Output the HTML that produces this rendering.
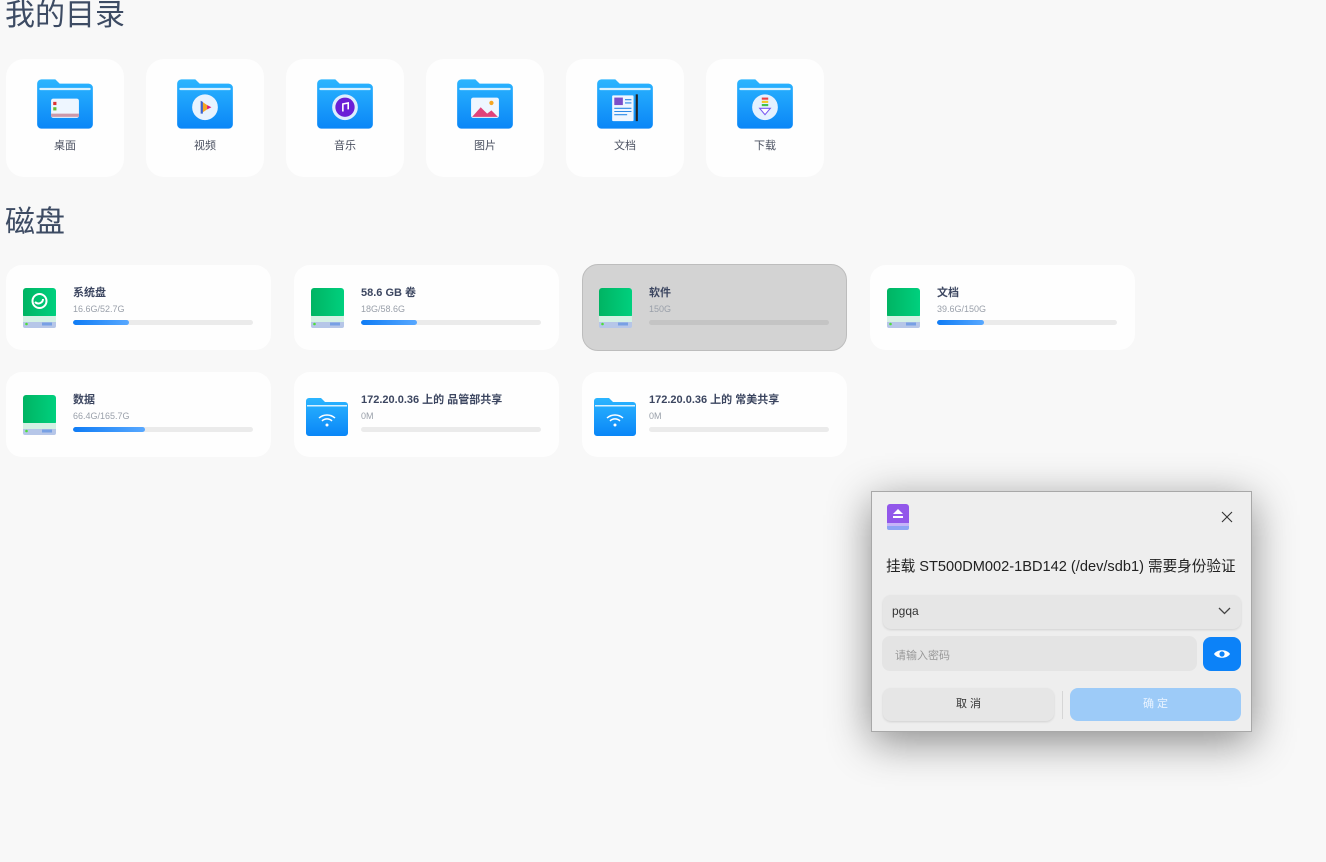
<!DOCTYPE html>
<html><head><meta charset="utf-8">
<style>
*{margin:0;padding:0;box-sizing:border-box}
body{width:1326px;height:862px;background:#f8f8f8;font-family:"Liberation Sans","Noto Sans CJK SC",sans-serif;position:relative;overflow:hidden;color:#414d68}
.h{position:absolute;left:5px;font-size:30px;color:#3d4b63;font-weight:400;line-height:1.2}
.fc{position:absolute;top:59px;width:118px;height:118px;background:#fefefe;border-radius:18px}
.fc svg{position:absolute;left:29px;top:18px}
.fc span{position:absolute;left:0;right:0;top:78px;text-align:center;font-size:11px;color:#4a5060}
.dc{position:absolute;width:265px;height:85px;background:#fefefe;border-radius:16px}
.dc.sel{background:#d3d3d3;border:1px solid #bdbdbd}
.dc .ic{position:absolute;left:16px;top:22px}
.dc .n{position:absolute;left:67px;top:19px;font-size:11px;font-weight:bold;color:#3c4660}
.dc .s{position:absolute;left:67px;top:39px;font-size:9px;color:#9aa0aa}
.dc .b{position:absolute;left:67px;top:55px;width:180px;height:5px;border-radius:3px;background:#ebebeb;overflow:hidden}
.dc.sel .b{background:#c4c4c4}
.dc .b i{display:block;height:100%;border-radius:3px;background:linear-gradient(90deg,#0f7cf5,#58a8ff)}
.dlg{position:absolute;left:871px;top:491px;width:381px;height:241px;background:#eeeeee;border:1px solid #a8a8a8;box-shadow:0 10px 40px rgba(0,0,0,.45)}
</style></head><body>
<div class="h" style="top:-2px">我的目录</div>
<div class="h" style="top:205px">磁盘</div>

<svg width="0" height="0" style="position:absolute">
<defs>
<linearGradient id="fg" x1="0" y1="0" x2="0" y2="1"><stop offset="0" stop-color="#2bb5ff"/><stop offset="1" stop-color="#0a86f7"/></linearGradient>
<linearGradient id="dg" x1="0" y1="0" x2="1" y2="0"><stop offset="0" stop-color="#00b463"/><stop offset="1" stop-color="#00d07e"/></linearGradient>
<symbol id="folder" viewBox="0 0 56 50">
<path d="M2 6a4 4 0 0 1 4-4h13l4 4h27a4 4 0 0 1 4 4v34a4 4 0 0 1-4 4H6a4 4 0 0 1-4-4z" fill="url(#fg)"/>
<rect x="4" y="10" width="48" height="2" rx="1" fill="#d8f1ff"/>
</symbol>
<symbol id="drive" viewBox="0 0 36 42">
<rect x="1" y="1" width="33" height="30" rx="3" fill="url(#dg)"/>
<rect x="1" y="29" width="33" height="12" rx="2" fill="#b6c6e8"/>
<rect x="1" y="29" width="33" height="6" fill="#d4f1e4"/>
<circle cx="4.5" cy="37" r="1.3" fill="#4ddd3a"/>
<path d="M21 35.5v3M23 35.5v3M25 35.5v3M27 35.5v3M29 35.5v3" stroke="#3a7be0" stroke-width="1"/>
</symbol>
</defs></svg>

<div class="fc" style="left:6px"><svg width="60" height="54" viewBox="0 0 56 50"><use href="#folder"/><rect x="15" y="20" width="26" height="18" rx="2" fill="#eef6ff"/><rect x="17" y="23" width="3" height="3" fill="#d33"/><rect x="17" y="28" width="3" height="3" fill="#6b3"/><rect x="15" y="34" width="26" height="3" fill="#c9a"/></svg><span>桌面</span></div>
<div class="fc" style="left:146px"><svg width="60" height="54" viewBox="0 0 56 50"><use href="#folder"/><circle cx="28" cy="28" r="12" fill="#e8f3ff"/><path d="M24 22l9 6-9 6z" fill="#f5a623"/><path d="M24 22v12h2V23z" fill="#3a63d6"/><path d="M30 26l4 2-4 2z" fill="#e2177a"/></svg><span>视频</span></div>
<div class="fc" style="left:286px"><svg width="60" height="54" viewBox="0 0 56 50"><use href="#folder"/><circle cx="28" cy="28" r="12" fill="#dceefe"/><circle cx="28" cy="28" r="9" fill="#6a1fd6"/><path d="M26 32v-7l5-1v6" stroke="#fff" stroke-width="1.5" fill="none"/></svg><span>音乐</span></div>
<div class="fc" style="left:426px"><svg width="60" height="54" viewBox="0 0 56 50"><use href="#folder"/><rect x="15" y="19" width="26" height="19" rx="2" fill="#eef6ff"/><path d="M16 37l8-9 6 6 4-3 6 6z" fill="#e0427a"/><circle cx="34" cy="24" r="2" fill="#f5a623"/></svg><span>图片</span></div>
<div class="fc" style="left:566px"><svg width="60" height="54" viewBox="0 0 56 50"><use href="#folder"/><rect x="16" y="17" width="20" height="24" rx="1" fill="#eef6ff"/><rect x="18" y="19" width="8" height="7" fill="#7b4fc9"/><path d="M28 21h6M28 24h6M18 29h16M18 32h16M18 35h12" stroke="#2b8ae8" stroke-width="1"/><rect x="38" y="16" width="2" height="25" fill="#222"/></svg><span>文档</span></div>
<div class="fc" style="left:706px"><svg width="60" height="54" viewBox="0 0 56 50"><use href="#folder"/><circle cx="28" cy="28" r="12" fill="#e4f1ff"/><rect x="25" y="19" width="6" height="2" fill="#ef4040"/><rect x="25" y="22" width="6" height="2" fill="#f5c623"/><rect x="25" y="25" width="6" height="2" fill="#45c24a"/><path d="M23 29h10l-5 6z" fill="#fff" stroke="#7a5af0"/></svg><span>下载</span></div>

<div class="dc" style="left:6px;top:265px"><svg class="ic" width="36" height="42"><use href="#drive"/><circle cx="17.5" cy="14" r="7" fill="none" stroke="#fff" stroke-width="2"/><path d="M13 15c3 3 8 1 8-3" stroke="#fff" stroke-width="2" fill="none"/></svg><div class="n">系统盘</div><div class="s">16.6G/52.7G</div><div class="b"><i style="width:31%"></i></div></div>
<div class="dc" style="left:294px;top:265px"><svg class="ic" width="36" height="42"><use href="#drive"/></svg><div class="n">58.6 GB 卷</div><div class="s">18G/58.6G</div><div class="b"><i style="width:31%"></i></div></div>
<div class="dc sel" style="left:582px;top:264px;height:87px"><svg class="ic" width="36" height="42" style="left:15px"><use href="#drive"/></svg><div class="n" style="left:66px">软件</div><div class="s" style="left:66px">150G</div><div class="b" style="left:66px"><i style="width:0"></i></div></div>
<div class="dc" style="left:870px;top:265px"><svg class="ic" width="36" height="42"><use href="#drive"/></svg><div class="n">文档</div><div class="s">39.6G/150G</div><div class="b"><i style="width:26%"></i></div></div>
<div class="dc" style="left:6px;top:372px"><svg class="ic" width="36" height="42"><use href="#drive"/></svg><div class="n">数据</div><div class="s">66.4G/165.7G</div><div class="b"><i style="width:40%"></i></div></div>
<div class="dc" style="left:294px;top:372px"><svg class="ic" width="44" height="40" style="left:11px;top:25px" viewBox="0 0 44 40"><path d="M1 4a3 3 0 0 1 3-3h12l4 4h20a3 3 0 0 1 3 3v28a3 3 0 0 1-3 3H4a3 3 0 0 1-3-3z" fill="url(#fg)"/><rect x="2" y="8" width="40" height="1.5" fill="#d8f1ff"/><path d="M14 21a12 12 0 0 1 16 0M17 24a7 7 0 0 1 10 0" stroke="#fff" stroke-width="1.5" fill="none"/><circle cx="22" cy="28" r="1.5" fill="#fff"/></svg><div class="n">172.20.0.36 上的 品管部共享</div><div class="s">0M</div><div class="b"></div></div>
<div class="dc" style="left:582px;top:372px"><svg class="ic" width="44" height="40" style="left:11px;top:25px" viewBox="0 0 44 40"><path d="M1 4a3 3 0 0 1 3-3h12l4 4h20a3 3 0 0 1 3 3v28a3 3 0 0 1-3 3H4a3 3 0 0 1-3-3z" fill="url(#fg)"/><rect x="2" y="8" width="40" height="1.5" fill="#d8f1ff"/><path d="M14 21a12 12 0 0 1 16 0M17 24a7 7 0 0 1 10 0" stroke="#fff" stroke-width="1.5" fill="none"/><circle cx="22" cy="28" r="1.5" fill="#fff"/></svg><div class="n">172.20.0.36 上的 常美共享</div><div class="s">0M</div><div class="b"></div></div>

<div class="dlg">
<svg style="position:absolute;left:14px;top:11px" width="24" height="28" viewBox="0 0 24 28"><rect x="1" y="1" width="22" height="22" rx="3" fill="#9257ea"/><rect x="1" y="20" width="22" height="7" rx="2" fill="#8ea4f4"/><rect x="1" y="20" width="22" height="3" fill="#c6b4f8"/><path d="M12 6l5 5H7z" fill="#fff"/><rect x="7" y="13" width="10" height="2" fill="#fff"/></svg>
<svg style="position:absolute;left:349px;top:19px" width="12" height="12"><path d="M1 1l10 10M11 1L1 11" stroke="#333" stroke-width="1.1"/></svg>
<div style="position:absolute;left:14px;top:63px;font-size:14.6px;color:#222;white-space:nowrap">挂载 ST500DM002-1BD142 (/dev/sdb1) 需要身份验证</div>
<div style="position:absolute;left:11px;top:103px;width:358px;height:34px;border-radius:8px;background:#e6e6e6;box-shadow:0 1px 2px rgba(0,0,0,.12)"><span style="position:absolute;left:9px;top:9px;font-size:12px;color:#333">pgqa</span><svg style="position:absolute;right:10px;top:12px" width="13" height="8"><path d="M1 1l5.5 5.5L12 1" stroke="#444" stroke-width="1.3" fill="none"/></svg></div>
<div style="position:absolute;left:10px;top:144px;width:315px;height:35px;border-radius:8px;background:#e4e4e4"><span style="position:absolute;left:13px;top:11px;font-size:11px;color:#999">请输入密码</span></div>
<div style="position:absolute;left:331px;top:145px;width:38px;height:34px;border-radius:8px;background:#0c82f8"><svg style="position:absolute;left:10px;top:11px" width="18" height="12" viewBox="0 0 18 12"><path d="M1 6C4 1 14 1 17 6 14 11 4 11 1 6z" fill="#fff"/><circle cx="9" cy="6" r="2.6" fill="#0c82f8"/></svg></div>
<div style="position:absolute;left:11px;top:196px;width:171px;height:33px;border-radius:8px;background:#e6e6e6;box-shadow:0 1px 2px rgba(0,0,0,.12);text-align:center;line-height:33px;font-size:11px;color:#333">取 消</div>
<div style="position:absolute;left:190px;top:199px;width:1px;height:28px;background:#d6d6d6"></div>
<div style="position:absolute;left:198px;top:196px;width:171px;height:33px;border-radius:8px;background:#9dcbf8;text-align:center;line-height:33px;font-size:11px;color:#eaf4ff">确 定</div>
</div>
</body></html>
